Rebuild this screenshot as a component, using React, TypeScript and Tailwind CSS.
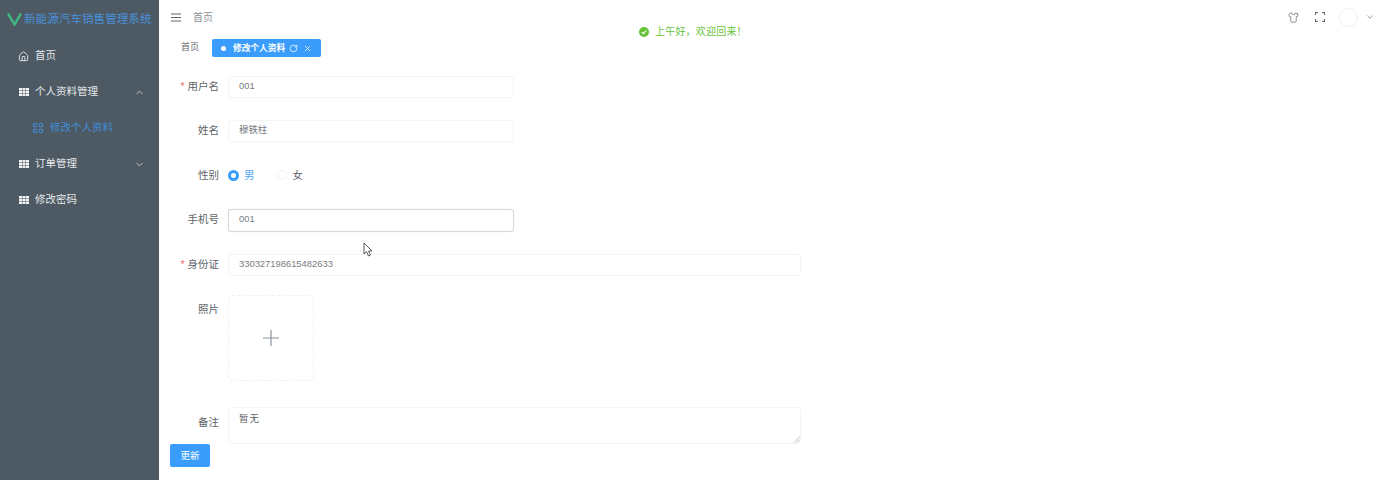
import React from 'react';
import { ChevronDown, ChevronUp, House, RotateCw, Shirt, X } from 'lucide-react';

const TableIcon = () => (
  <svg width="10" height="10" viewBox="0 0 10 10" className="shrink-0">
    <path fill="#f2f4f5" d="M0 1h3v2.300H0zM3.500 1h3v2.300h-3zM7 1h3v2.300H7zM0 3.800h3v2.300H0zM3.500 3.800h3v2.300h-3zM7 3.800h3v2.300H7zM0 6.600h3V9H0zM3.500 6.600h3V9h-3zM7 6.600h3V9H7z" />
  </svg>
);

const Sidebar = () => (
  <aside className="w-[159px] shrink-0 bg-[#4d5a63] text-[10.5px] text-[#e6e9eb]">
    <div className="flex h-[38px] items-center pl-[7px]">
      <svg width="15" height="13" viewBox="0 0 15 13" className="shrink-0">
        <path fill="none" stroke="#41b883" strokeWidth="2.400" d="M1 0.500L7.500 11.500L14 0.500" />
      </svg>
      <span className="ml-[2px] whitespace-nowrap text-[11.6px] text-[#4a90d9]">新能源汽车销售管理系统</span>
    </div>
    <div className="flex h-[36px] items-center pl-[18px]">
      <House size={11} className="shrink-0 text-[#e6e9eb]" />
      <span className="ml-[6px]">首页</span>
    </div>
    <div className="flex h-[36px] items-center justify-between pl-[19px] pr-[14px]">
      <div className="flex items-center">
        <TableIcon />
        <span className="ml-[6px]">个人资料管理</span>
      </div>
      <ChevronUp size={11} className="text-[#c9ced2]" />
    </div>
    <div className="flex h-[36px] items-center pl-[33px] text-[#3f8fdc]">
      <svg width="10" height="10" viewBox="0 0 10 10" className="shrink-0">
        <path fill="none" stroke="#3f8fdc" strokeWidth="0.900" d="M0.500 0.500h3.300v3.300H0.500zM6.200 0.500h3.300v3.300H6.200zM0.500 6.200h3.300v3.300H0.500zM6.200 6.200h3.300v3.300H6.200z" />
      </svg>
      <span className="ml-[7px]">修改个人资料</span>
    </div>
    <div className="flex h-[36px] items-center justify-between pl-[19px] pr-[14px]">
      <div className="flex items-center">
        <TableIcon />
        <span className="ml-[6px]">订单管理</span>
      </div>
      <ChevronDown size={11} className="text-[#c9ced2]" />
    </div>
    <div className="flex h-[36px] items-center pl-[19px]">
      <TableIcon />
      <span className="ml-[6px]">修改密码</span>
    </div>
  </aside>
);

const FormLabel = ({ text, required }: { text: string; required?: boolean }) => (
  <label className="block w-[59px] shrink-0 pr-[9px] text-right text-[10.5px] leading-[20px] text-[#606266]">
    {required && <span className="mr-[3px] text-[#f56c6c]">*</span>}
    {text}
  </label>
);

const TextField = ({ value, wide, focused }: { value: string; wide?: boolean; focused?: boolean }) => (
  <div
    className={`flex items-center rounded-[3px] border pb-[2px] pl-[10px] text-[9.4px] text-[#787b80] ${wide ? 'w-[573px]' : 'w-[286px]'} ${
      focused ? 'h-[23px] border-[#d5d7db] shadow-[0_0_1px_#d5d7db]' : 'h-[22px] border-[#f3f4f5]'
    }`}
  >
    {value}
  </div>
);

const App = () => {
  return (
    <div className="relative flex h-[480px] w-[1375px] overflow-hidden bg-white font-['Liberation_Sans','Noto_Sans_CJK_SC',sans-serif]">
      <Sidebar />

      <main className="min-w-0 flex-1">
        <header className="flex h-[36px] items-center justify-between pb-[2px] pl-[12px]">
          <div className="flex items-center text-[10px] text-[#8c8f94]">
            <svg width="10" height="9" viewBox="0 0 10 9" className="shrink-0">
              <path stroke="#5f6368" strokeWidth="1.200" d="M0 1h10M0 4.500h10M0 8h10" />
            </svg>
            <span className="ml-[12px]">首页</span>
          </div>
          <div className="flex items-center text-[#5f6368]">
            <Shirt size={11} strokeWidth={1.5} />
            <svg width="10" height="10" viewBox="0 0 10 10" className="ml-[16px] shrink-0">
              <path fill="none" stroke="#5f6368" strokeWidth="1.100" d="M0.500 3V0.500H3M7 0.500H9.500V3M9.500 7V9.500H7M3 9.500H0.500V7" />
            </svg>
            <div className="ml-[14px] h-[19px] w-[19px] rounded-full border border-[#eceef0]" />
            <ChevronDown size={10} className="ml-[7px] text-[#8c8f94]" />
          </div>
        </header>

        <div className="mt-[3px] flex h-[18px] items-center pl-[22px]">
          <span className="text-[9px] text-[#606266]">首页</span>
          <div className="ml-[13px] flex h-[18px] w-[109px] items-center rounded-[2px] bg-[#3a9dfb] pl-[9px] text-[8.7px] text-white">
            <span className="h-[5px] w-[5px] rounded-full bg-white" />
            <span className="ml-[7px] pt-[1px] font-bold">修改个人资料</span>
            <RotateCw size={9} className="ml-[4px]" />
            <X size={9} className="ml-[5px]" />
          </div>
        </div>

        <form className="mt-[19px] pl-[10px]">
          <div className="flex">
            <FormLabel text="用户名" required />
            <TextField value="001" />
          </div>
          <div className="mt-[22px] flex">
            <FormLabel text="姓名" />
            <TextField value="穆铁柱" />
          </div>
          <div className="mt-[22px] flex h-[22px] items-center">
            <FormLabel text="性别" />
            <span className="h-[11px] w-[11px] rounded-full border-[3px] border-[#3a9dfb] bg-white" />
            <span className="ml-[5px] pt-[1px] text-[10.5px] text-[#56a8f5]">男</span>
            <span className="ml-[22px] h-[10px] w-[10px] rounded-full border border-[#f0f1f2]" />
            <span className="ml-[6px] pt-[1px] text-[10.5px] text-[#606266]">女</span>
          </div>
          <div className="mt-[23px] flex">
            <FormLabel text="手机号" />
            <TextField value="001" focused />
          </div>
          <div className="mt-[22px] flex">
            <FormLabel text="身份证" required />
            <TextField value="330327198615482633" wide />
          </div>
          <div className="mt-[19px] flex">
            <div className="pt-[4px]">
              <FormLabel text="照片" />
            </div>
            <div className="flex h-[86px] w-[86px] items-center justify-center rounded-[4px] border border-dashed border-[#eff0f2]">
              <svg width="16" height="16" viewBox="0 0 16 16">
                <path stroke="#8c939d" strokeWidth="1.200" d="M8 0v16M0 8h16" />
              </svg>
            </div>
          </div>
          <div className="mt-[26px] flex">
            <div className="pt-[5px]">
              <FormLabel text="备注" />
            </div>
            <div className="relative h-[37px] w-[573px] rounded-[3px] border border-[#f3f4f5] pl-[10px] pt-[4px] text-[9.400px] tracking-[1px] text-[#606266]">
              暂无
              <svg width="7" height="7" viewBox="0 0 7 7" className="absolute bottom-0 right-0">
                <path stroke="#a0a0a0" strokeWidth="0.700" d="M0.500 7L7 0.500M3.500 7L7 3.500" />
              </svg>
            </div>
          </div>
          <button type="button" className="ml-[1px] block h-[23px] w-[40px] rounded-[2px] bg-[#3a9dfb] pt-[1px] text-[9.500px] text-white">
            更新
          </button>
        </form>
      </main>

      {/* 欢迎提示 */}
      <div className="absolute left-[639px] top-[24px] flex items-center text-[10px] tracking-[0.2px] text-[#67c23a]">
        <svg width="10" height="10" viewBox="0 0 10 10" className="shrink-0">
          <circle cx="5" cy="5" r="5" fill="#67c23a" />
          <path d="M2.700 5.100l1.600 1.600 3-3.100" fill="none" stroke="#fff" strokeWidth="1.100" />
        </svg>
        <span className="ml-[6px]">上午好，欢迎回来！</span>
      </div>

      {/* 鼠标指针 */}
      <svg width="11" height="15" viewBox="0 0 11 15" className="absolute left-[363px] top-[242px]">
        <path d="M1 1v11l2.600-2.300L5.500 14l2-1-1.900-4H9z" fill="#fff" stroke="#44484c" strokeWidth="0.900" />
      </svg>
    </div>
  );
};

export default App;
